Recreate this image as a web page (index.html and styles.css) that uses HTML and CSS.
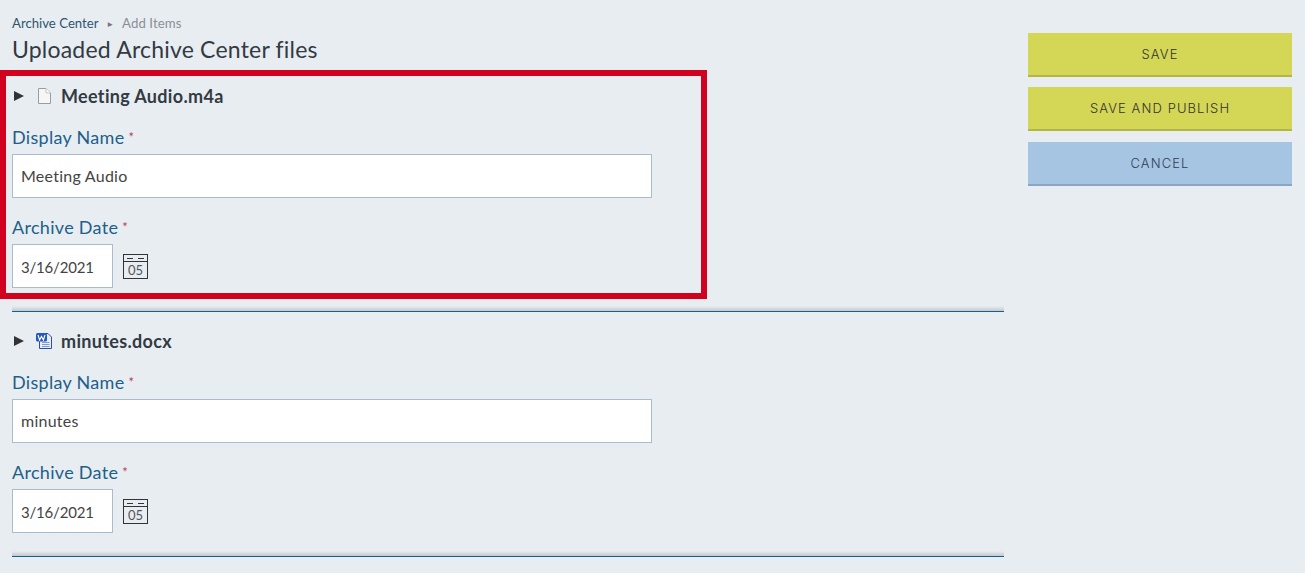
FILE: index.html

```html
<!DOCTYPE html>
<html lang="en">
<head>
  <meta charset="UTF-8" />
  <title>Uploaded Archive Center files</title>
  <link rel="stylesheet" href="styles.css">
</head>
<body>
  <div class="page">
    <div class="main">
      <div class="breadcrumb">
        <a href="#">Archive Center</a>
        <span class="crumb-sep">&#9658;</span>
        <span class="crumb-current">Add Items</span>
      </div>
      <h1>Uploaded Archive Center files</h1>

      <div class="file-item">
        <div class="file-head">
          <span class="toggle"></span>
          <svg class="file-icon" width="16" height="18" viewBox="0 0 16 18">
            <path d="M2.5 1.5H10L14.5 6V16.5H2.5Z" fill="#f6f6f6" stroke="#9c9c9c"/>
            <path d="M10 1.5V6H14.5" fill="#fff" stroke="#c4c4c4"/>
          </svg>
          <span class="file-name">Meeting Audio.m4a</span>
        </div>
        <label class="field-label">Display Name <span class="req">*</span></label>
        <input class="text-input" type="text" value="Meeting Audio">
        <label class="field-label date-label">Archive Date <span class="req">*</span></label>
        <div class="date-row">
          <input class="date-input" type="text" value="3/16/2021">
          <span class="cal">
            <span class="cal-top"><i></i><i></i></span>
            <span class="cal-day">05</span>
          </span>
        </div>
      </div>

      <div class="file-item">
        <div class="file-head">
          <span class="toggle"></span>
          <svg class="file-icon" width="16" height="18" viewBox="0 0 16 18">
            <path d="M3.5 1.5H12L15.5 5V16.5H3.5Z" fill="#e6ecf8" stroke="#2f4f96"/>
            <path d="M6 10.5H13.5M6 12.5H13.5M6 14.5H13.5" stroke="#7f9bd0"/>
            <rect x="0" y="1" width="11" height="8.5" rx="1.5" fill="#2458c0"/>
            <path d="M2 3L3.6 8L5.5 4.4L7.4 8L9 3" fill="none" stroke="#fff" stroke-width="1.1"/>
          </svg>
          <span class="file-name">minutes.docx</span>
        </div>
        <label class="field-label">Display Name <span class="req">*</span></label>
        <input class="text-input" type="text" value="minutes">
        <label class="field-label date-label">Archive Date <span class="req">*</span></label>
        <div class="date-row">
          <input class="date-input" type="text" value="3/16/2021">
          <span class="cal">
            <span class="cal-top"><i></i><i></i></span>
            <span class="cal-day">05</span>
          </span>
        </div>
      </div>
    </div>

    <div class="actions">
      <button class="btn btn-save">SAVE</button>
      <button class="btn btn-save">SAVE AND PUBLISH</button>
      <button class="btn btn-cancel">CANCEL</button>
    </div>
  </div>

  <div class="highlight"></div>
</body>
</html>
```

FILE: styles.css

```css
html, body { margin: 0; height: 100%; }
body { background: #e8edf2; font-family: "Lato", "Open Sans", sans-serif; color: #333; overflow: hidden; }
.page { display: flex; align-items: flex-start; padding: 0 13px 0 12px; gap: 24px; }
.main { width: 992px; flex: none; padding-top: 14px; }
.breadcrumb { font-size: 13.2px; line-height: 18px; color: #2f5570; }
.breadcrumb a { color: #2f5570; text-decoration: none; }
.crumb-sep { font-size: 8px; color: #777; margin: 0 4.5px; vertical-align: 1px; }
.crumb-current { color: #8b8f96; letter-spacing: 0.1px; }
h1 { margin: 0 0 2px; font-size: 23px; font-weight: 400; line-height: 32px; color: #333a42; letter-spacing: 0.2px; }
.file-item { height: 227px; padding-top: 17px; position: relative; border-bottom: 1px solid #15608f; }
.file-item::after { content: ""; position: absolute; left: 0; right: 0; bottom: 0; height: 5px; background: linear-gradient(#e8edf2, #c6c8cb); }
.file-head { display: flex; align-items: center; height: 24px; }
.toggle { flex: none; width: 0; height: 0; margin: 0 12px 0 2px; border-left: 10px solid #333; border-top: 5px solid transparent; border-bottom: 5px solid transparent; }
.file-icon { flex: none; margin-right: 9px; }
.file-name { font-size: 18px; font-weight: 700; color: #333a42; letter-spacing: 0.33px; }
.field-label { display: block; font-size: 18px; line-height: 24px; letter-spacing: 0.3px; color: #1d5f8a; margin-top: 17px; }
.req { color: #b8404f; font-size: 13px; vertical-align: 2px; letter-spacing: 0; margin-left: -1px; }
.text-input, .date-input { display: block; box-sizing: border-box; height: 44px; background: #fff; border: 1px solid #a9bbcd; border-radius: 0; padding: 0 8px; font-family: inherit; color: #444; }
.text-input { width: 640px; margin-top: 5px; font-size: 16px; letter-spacing: 0.25px; padding-bottom: 1px; }
.date-input { width: 101px; font-size: 15px; letter-spacing: -0.2px; padding-top: 1px; }
.date-row { display: flex; align-items: center; gap: 10px; margin-top: 5px; }
.cal { width: 25px; height: 25px; box-sizing: border-box; border: 1px solid #333; display: block; }
.cal-top { display: flex; gap: 5px; justify-content: center; height: 3px; border-bottom: 1px solid #333; padding-top: 3px; }
.cal-top i { width: 6px; height: 1px; background: #333; }
.cal-day { display: block; text-align: center; font-size: 13px; line-height: 17px; color: #555; }
.actions { width: 264px; flex: none; padding-top: 33px; display: flex; flex-direction: column; }
.btn { height: 44px; border: 0; font-family: "Inter", "Lato", sans-serif; font-size: 13px; font-weight: 300; letter-spacing: 1.1px; color: #333; margin-bottom: 10px; padding: 0; }
.btn-save { background: #d4d656; border-bottom: 2px solid #b3b544; }
.btn-cancel { background: #a6c5e2; border-bottom: 2px solid #8ba6c2; margin-top: 1px; color: #2f3c58; }
.highlight { position: absolute; left: 0; top: 70px; width: 707px; height: 229px; box-sizing: border-box; border: 6px solid #d0021f; pointer-events: none; }
```
